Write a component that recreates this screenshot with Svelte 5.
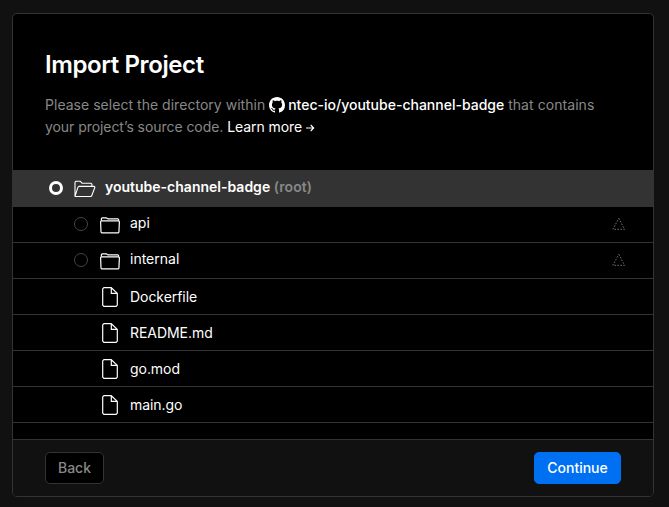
<script>
  const entries = [
    { name: 'api', kind: 'folder' },
    { name: 'internal', kind: 'folder' },
    { name: 'Dockerfile', kind: 'file' },
    { name: 'README.md', kind: 'file' },
    { name: 'go.mod', kind: 'file' },
    { name: 'main.go', kind: 'file' }
  ];
</script>

<main class="card">
  <header>
    <h1>Import Project</h1>
    <p>
      <span class="lead">Please select the directory within</span> <span class="repo"><svg class="github" width="16" height="16" viewBox="0 0 16 16"><path fill="#fff" fill-rule="evenodd" d="M8 0C3.58 0 0 3.58 0 8c0 3.54 2.29 6.53 5.47 7.59.4.07.55-.17.55-.38 0-.19-.01-.82-.01-1.49-2.01.37-2.53-.49-2.69-.94-.09-.23-.48-.94-.82-1.13-.28-.15-.68-.52-.01-.53.63-.01 1.08.58 1.23.82.72 1.21 1.87.87 2.33.66.07-.52.28-.87.51-1.07-1.78-.2-3.64-.89-3.64-3.95 0-.87.31-1.59.82-2.15-.08-.2-.36-1.02.08-2.12 0 0 .67-.21 2.2.82.64-.18 1.32-.27 2-.27s1.36.09 2 .27c1.53-1.04 2.2-.82 2.2-.82.44 1.1.16 1.92.08 2.12.51.56.82 1.27.82 2.15 0 3.07-1.87 3.75-3.65 3.95.29.25.54.73.54 1.48 0 1.07-.01 1.93-.01 2.2 0 .21.15.46.55.38A8.01 8.01 0 0 0 16 8c0-4.42-3.58-8-8-8z" /></svg>ntec-io/youtube-channel-badge</span> <span class="tail">that contains</span><br />
      <span class="second">your project’s source code. <span class="learn">Learn more <svg class="arrow" width="9" height="8" viewBox="0 0 9 8" fill="none" stroke="#fff" stroke-width="1.1"><path d="M0 4h7.7M4.7 1l3 3-3 3" /></svg></span></span>
    </p>
  </header>

  <div class="tree">
    <div class="row root">
      <span class="radio checked"></span>
      <svg width="22" height="18" viewBox="0 0 22 18" fill="none" stroke="#fff" stroke-width="1.1" stroke-linejoin="round">
        <path d="M1 16.3V2.1L1.8 1.3h4.6l1.8 2h8.9l.8.8v2.3M1 16.3 4 7.1l.9-.7h15.2l.8.8-3.2 8.6-.9.7H1.5z" />
      </svg>
      <span class="name">youtube-channel-badge <span class="muted">(root)</span></span>
    </div>
    {#each entries as entry}
      <div class="row {entry.kind}">
        {#if entry.kind === 'folder'}
          <span class="radio"></span>
          <svg width="20" height="17" viewBox="0 0 20 17" fill="none" stroke="#fff" stroke-width="1.2" stroke-linejoin="round">
            <path d="M1 15.2.6 4.6l.7-.8h17.4l.7.8-.5 10.6-.7.7H1.7z" />
            <path d="M1.4 3.7V1.6L2.1.8h4.1l1.9 1.1h9.8l.7.7v1.2" />
          </svg>
          <span class="name">{entry.name}</span>
          <svg class="framework" width="14" height="12" viewBox="0 0 14 12" fill="none" stroke="#777" stroke-width="1" stroke-dasharray="1.5 1.5">
            <path d="M6.8.4 12.6 11.3H.8z" />
          </svg>
        {:else}
          <svg width="16" height="20" viewBox="0 0 16 20" fill="none" stroke="#fff" stroke-width="1.2" stroke-linejoin="round">
            <path d="M9.3.7H1.8L.7 1.8v16.4l1.1 1.1h12.4l1.1-1.1V6.4zM9.3.7v5.7h6" />
          </svg>
          <span class="name">{entry.name}</span>
        {/if}
      </div>
    {/each}
  </div>

  <footer>
    <button class="back">Back</button>
    <button class="continue">Continue</button>
  </footer>
</main>

<style>
  :global(body) {
    background: #111;
  }

  .card {
    box-sizing: border-box;
    width: 642px;
    height: 484px;
    margin: 13px 0 0 12px;
    display: flex;
    flex-direction: column;
    overflow: hidden;
    border: 1px solid #333;
    border-radius: 5px;
    background: #000;
    color: #fff;
    font-family: Inter, sans-serif;
    font-size: 14px;
  }

  header {
    box-sizing: border-box;
    height: 156px;
    padding: 33px 32px 0;
  }

  h1 {
    margin: 0;
    font-size: 24px;
    line-height: 36px;
    font-weight: 600;
    letter-spacing: -0.4px;
  }

  p {
    margin: 11px 0 0;
    color: #888;
    line-height: 22px;
    white-space: nowrap;
  }

  .lead {
    letter-spacing: 0.03px;
  }

  .tail {
    letter-spacing: 0.06px;
  }

  .second {
    letter-spacing: -0.06px;
  }

  .repo {
    color: #fff;
    font-weight: 500;
  }

  .github {
    margin-right: 3px;
    vertical-align: -3px;
  }

  .learn {
    color: #fff;
  }

  .tree {
    flex: 1;
  }

  .row {
    box-sizing: border-box;
    height: 36px;
    display: flex;
    align-items: center;
    border-bottom: 1px solid #333;
  }

  .row svg {
    flex: none;
  }

  .root {
    height: 37px;
    padding-left: 36px;
    background: #333;
    font-weight: 600;
  }

  .root svg {
    margin: 1px 0 0 11px;
  }

  .root .name {
    margin-left: 9px;
    padding-bottom: 3px;
  }

  .muted {
    color: #888;
    letter-spacing: 0.1px;
  }

  .folder {
    padding: 0 27px 0 61px;
  }

  .folder > svg {
    margin: 1px 0 0 12px;
  }

  .folder .name {
    margin-left: 10px;
    padding-bottom: 4px;
  }

  .folder .radio {
    margin-bottom: 2px;
  }

  .folder .framework {
    margin: 0 0 2px auto;
  }

  .file {
    padding-left: 89px;
  }

  .file svg {
    margin-top: 1px;
  }

  .file .name {
    margin-left: 12px;
    letter-spacing: -0.05px;
  }

  .radio {
    box-sizing: border-box;
    width: 14px;
    height: 14px;
    border: 1px solid #444;
    border-radius: 50%;
  }

  .checked {
    border: 3px solid #fff;
    background: #333;
  }

  footer {
    box-sizing: border-box;
    height: 57px;
    padding: 0 32px;
    display: flex;
    align-items: center;
    justify-content: space-between;
    border-top: 1px solid #333;
    background: #111;
  }

  button {
    box-sizing: border-box;
    height: 32px;
    padding: 0 0 2px;
    border: 1px solid #333;
    border-radius: 5px;
    font: 500 14px Inter, sans-serif;
  }

  .back {
    width: 59px;
    background: #000;
    color: #888;
  }

  .continue {
    width: 87px;
    border-color: #0070f3;
    background: #0070f3;
    color: #fff;
  }
</style>
